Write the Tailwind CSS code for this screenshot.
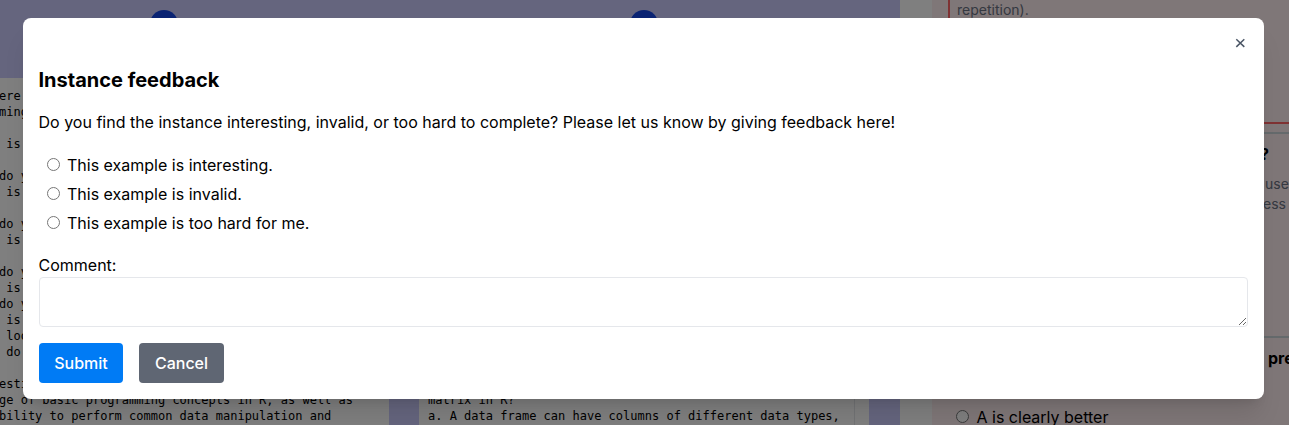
<!DOCTYPE html>
<html lang="en">
<head>
<meta charset="utf-8">
<title>Instance feedback</title>
<script src="https://cdn.jsdelivr.net/npm/@tailwindcss/browser@4"></script>
</head>
<body class="relative h-[425px] w-[1289px] overflow-hidden bg-white font-['Inter',sans-serif] text-base text-black">
<div class="flex h-[425px] overflow-hidden">
  <main class="flex w-[900px] shrink-0 flex-col bg-[#cacafc]">
    <div class="flex h-[78px] shrink-0 pt-2.5">
      <div class="flex w-[328px] shrink-0 justify-center"><span class="size-7 rounded-full bg-blue-700"></span></div>
      <div class="flex w-[632px] shrink-0 justify-center"><span class="size-7 rounded-full bg-blue-700"></span></div>
    </div>
    <div class="flex flex-1 gap-[30px] font-['DejaVu_Sans_Mono',monospace] text-xs leading-4">
      <pre class="w-[389px] overflow-hidden bg-white pt-2.5 -indent-px font-[inherit]"><span class="-ml-px block indent-0">ere
ming

 is

do you
 is

do you
 is

do you
 is
do you
 is
 look
 do

esting
ge of basic programming concepts in R, as well as
bility to perform common data manipulation and</span></pre>
      <div class="flex w-[450px] items-end bg-white">
        <pre class="h-full w-[436px] overflow-hidden border-r border-gray-200 pt-[314px] pl-[9px] font-[inherit]">matrix in R?
a. A data frame can have columns of different data types,</pre>
      </div>
    </div>
  </main>
  <aside class="ml-8 flex w-[357px] shrink-0 flex-col bg-[#ffeef0] pl-4">
    <div class="h-[124px] shrink-0 border-b-2 border-l-2 border-red-400 pl-[7px] text-sm leading-5 text-gray-500">repetition).</div>
    <section class="mt-2 h-[204px] shrink-0 border-t-2 border-[#cbd5d8] pr-1">
      <h3 class="pt-2 pl-[312px] leading-6 font-bold">?</h3>
      <p class="mt-2 pl-[315px] text-sm leading-5 whitespace-pre text-gray-500"><span class="ml-0.5">use</span>
ess</p>
    </section>
    <section class="shrink-0 border-t-2 border-[#cbd5d8]">
      <h3 class="pt-2 pl-[320px] leading-6 font-bold whitespace-nowrap">preferred</h3>
      <label class="mt-[35px] flex items-center pl-2 leading-6"><input type="radio" class="mr-[7.5px] mb-0.5 size-[13px]">A is clearly better</label>
    </section>
  </aside>
</div>

<div class="absolute inset-0 bg-black/50"></div>
<div class="absolute top-[18px] left-[23px] flex h-[381px] w-[1241px] flex-col rounded-lg bg-white px-4 shadow-xl">
  <button class="mt-5 mr-[3px] size-[10px] self-end text-gray-600" aria-label="Close">
    <svg class="size-[10px]" viewBox="0 0 10 10" fill="none" stroke="currentColor" stroke-width="1.5"><path d="M1.3 1.3 9.3 8.9M9.3 1.3 1.3 8.9"/></svg>
  </button>
  <h2 class="mt-[18px] -ml-[0.5px] text-xl leading-7 font-bold">Instance feedback</h2>
  <p class="mt-4 -ml-[0.5px] leading-6">Do you find the instance interesting, invalid, or too hard to complete? Please let us know by giving feedback here!</p>
  <div class="mt-[19px] flex flex-col gap-[5px] pl-2 leading-6">
    <label class="flex items-center"><input type="radio" name="kind" class="mr-[7px] mb-0.5 size-[13px]">This example is interesting.</label>
    <label class="flex items-center"><input type="radio" name="kind" class="mr-[7px] mb-0.5 size-[13px]">This example is invalid.</label>
    <label class="flex items-center"><input type="radio" name="kind" class="mr-[7px] mb-0.5 size-[13px]">This example is too hard for me.</label>
  </div>
  <label class="mt-[18px] -ml-[0.5px] leading-6" for="comment">Comment:</label>
  <textarea id="comment" class="h-[50px] w-full shrink-0 rounded border border-gray-200"></textarea>
  <div class="mt-4 flex gap-4 font-medium text-white">
    <button class="h-10 w-[84px] rounded bg-[#007bf5]">Submit</button>
    <button class="h-10 w-[85px] rounded bg-[#5f6673]">Cancel</button>
  </div>
</div>
</body>
</html>
